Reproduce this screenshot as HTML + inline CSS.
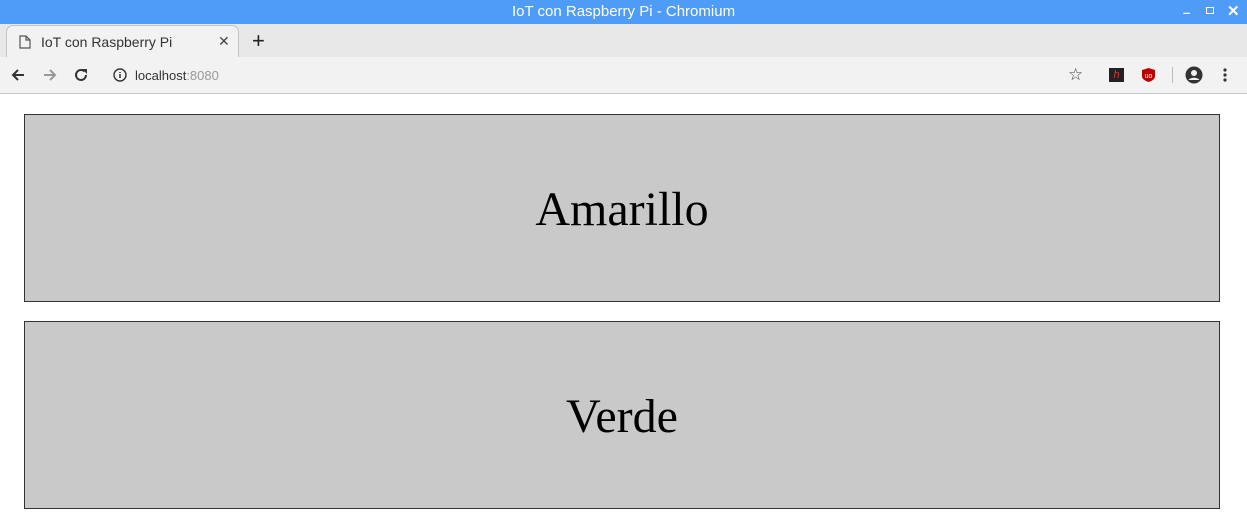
<!DOCTYPE html>
<html><head><style>
*{margin:0;padding:0;box-sizing:border-box}
body{width:1247px;height:510px;overflow:hidden;background:#fff;font-family:"Liberation Sans",sans-serif;position:relative}
.title{position:absolute;top:0;left:0;width:1247px;height:24px;background:#4f9cf6;color:#fff;font-size:15px;text-align:center;line-height:23px}
.tabs{position:absolute;top:24px;left:0;width:1247px;height:34px;background:#e8e8e8}
.tab{position:absolute;left:6px;top:1px;width:233px;height:34px;background:#f2f2f2;border:1px solid #c4c4c4;border-bottom:none;border-radius:7px 7px 0 0;font-size:14px;color:#333}
.bar{position:absolute;top:57px;left:0;width:1247px;height:37px;background:#f2f2f2;border-bottom:1px solid #c8c8c8}
.url{position:absolute;left:103px;top:5px;width:1000px;height:26px;background:#f2f2f2;border-radius:13px}
.btn{position:absolute;left:24px;width:1196px;height:188px;background:#c9c9c9;border:1px solid #333;font-family:"Liberation Serif",serif;font-size:48px;text-align:center;line-height:190px;color:#000}
</style></head><body>
<div class="title">IoT con Raspberry Pi - Chromium</div>
<div style="position:absolute;top:5px;left:1183px;color:#fff;font-size:13px;font-weight:bold">–</div>
<div style="position:absolute;top:7px;left:1206px;width:8px;height:7px;border:1.5px solid #fff"></div>
<div style="position:absolute;top:2px;left:1227px;color:#fff;font-size:15px;font-weight:bold">✕</div>
<div class="tabs">
<div class="tab">
<svg style="position:absolute;left:12px;top:9px" width="12" height="14"><path d="M1 1h6l4 4v8H1z M7 1v4h4" fill="none" stroke="#555" stroke-width="1.2"/></svg>
<span style="position:absolute;left:34px;top:8px">IoT con Raspberry Pi</span>
<span style="position:absolute;left:211px;top:7px;font-size:14px;color:#444">✕</span>
</div>
<span style="position:absolute;left:252px;top:4px;font-size:22px;color:#222">+</span>
</div>
<div class="bar">
<svg style="position:absolute;left:10px;top:10px" width="16" height="16"><path d="M14 8H3M8 3L3 8l5 5" fill="none" stroke="#333" stroke-width="2"/></svg>
<svg style="position:absolute;left:42px;top:10px" width="16" height="16"><path d="M2 8h11M8 3l5 5-5 5" fill="none" stroke="#999" stroke-width="2"/></svg>
<svg style="position:absolute;left:73px;top:10px" width="16" height="16"><path d="M13 8a5 5 0 1 1-1.5-3.6" fill="none" stroke="#333" stroke-width="2"/><path d="M9 2h5v5z" fill="#333"/></svg>
<div class="url"></div>
<svg style="position:absolute;left:113px;top:11px" width="14" height="14"><circle cx="7" cy="7" r="6" fill="none" stroke="#333" stroke-width="1.4"/><path d="M7 6v4M7 4v1" stroke="#333" stroke-width="1.5"/></svg>
<span style="position:absolute;left:135px;top:11px;font-size:13px;color:#333">localhost<span style="color:#999">:8080</span></span>
<span style="position:absolute;left:1068px;top:8px;font-size:17px;color:#444">☆</span>
<div style="position:absolute;left:1109px;top:11px;width:15px;height:14px;background:#222;color:#d33;font-size:11px;font-style:italic;text-align:center;line-height:14px">h</div>
<svg style="position:absolute;left:1141px;top:10px" width="15" height="16"><path d="M7.5 1L14 3v6c0 3-3 5-6.5 6C4 14 1 12 1 9V3z" fill="#b00"/><text x="7.5" y="11" font-size="7" fill="#fff" text-anchor="middle" font-family="Liberation Sans">uo</text></svg>
<div style="position:absolute;left:1172px;top:10px;width:1px;height:16px;background:#bbb"></div>
<svg style="position:absolute;left:1185px;top:9px" width="18" height="18"><circle cx="9" cy="9" r="8.5" fill="#333"/><circle cx="9" cy="7" r="3" fill="#f2f2f2"/><path d="M3.5 14c2-3 9-3 11 0" fill="#f2f2f2"/></svg>
<svg style="position:absolute;left:1222px;top:10px" width="6" height="16"><circle cx="3" cy="3" r="1.6" fill="#333"/><circle cx="3" cy="8" r="1.6" fill="#333"/><circle cx="3" cy="13" r="1.6" fill="#333"/></svg>
</div>
<div class="btn" style="top:114px">Amarillo</div>
<div class="btn" style="top:321px">Verde</div>
</body></html>
